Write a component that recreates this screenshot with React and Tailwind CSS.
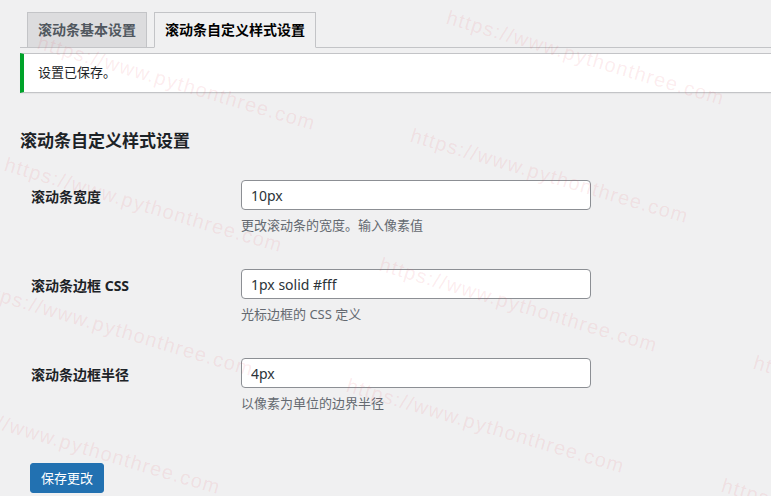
import React from "react";

const marks = [
  [450, 10],
  [41, 35],
  [414, 128],
  [8, 157],
  [383, 257],
  [-21, 281],
  [350, 378],
  [-54, 399],
  [757, 355],
  [725, 478],
];

const rows = [
  { label: "滚动条宽度", value: "10px", desc: "更改滚动条的宽度。输入像素值" },
  { label: "滚动条边框 CSS", value: "1px solid #fff", desc: "光标边框的 CSS 定义" },
  { label: "滚动条边框半径", value: "4px", desc: "以像素为单位的边界半径" },
];

export default function App() {
  return (
    <div className="relative w-[771px] h-[496px] overflow-hidden bg-[#f0f0f1] font-['Noto_Sans','Noto_Sans_CJK_SC',sans-serif] text-[#1d2327]">
      <div className="pl-5 pt-3">
        <div className="flex gap-[7px] pl-[7px] border-b border-[#c3c4c7]">
          <div className="-mb-px h-[36px] px-[10px] border border-[#c3c4c7] bg-[#dcdcde] text-[#50575e] text-[14px] font-bold leading-[34px] whitespace-nowrap">
            滚动条基本设置
          </div>
          <div className="-mb-px h-[36px] px-[10px] border border-[#c3c4c7] border-b-[#f0f0f1] bg-[#f0f0f1] text-black text-[14px] font-bold leading-[34px] whitespace-nowrap">
            滚动条自定义样式设置
          </div>
        </div>

        <div className="mt-[5px] h-[40px] flex items-center bg-white border-y border-[#c3c4c7] border-l-4 border-l-[#00a32a] pl-[14px] text-[13px] text-[#1d2327] shadow-[0_1px_1px_rgba(0,0,0,0.04)]">
          设置已保存。
        </div>

        <h2 className="mt-[36px] text-[17px] font-bold leading-[24px] text-[#1d2327]">
          滚动条自定义样式设置
        </h2>

        <div className="mt-[27px] flex flex-col gap-[35px]">
          {rows.map((r) => (
            <div key={r.label} className="flex items-start">
              <div className="w-[221px] pl-[11px] pt-[2px] text-[14px] font-bold leading-[30px] text-[#1d2327] whitespace-nowrap">
                {r.label}
              </div>
              <div className="flex flex-col">
                <input
                  readOnly
                  value={r.value}
                  className="w-[350px] h-[30px] rounded-[4px] border border-[#8c8f94] bg-white px-[9px] text-[14px] text-[#2c3338] outline-none"
                />
                <div className="mt-[6px] text-[13px] leading-[18px] text-[#646970] whitespace-nowrap">
                  {r.desc}
                </div>
              </div>
            </div>
          ))}
        </div>

        <button className="mt-[51px] ml-[10px] h-[30px] px-[10px] rounded-[3px] border border-[#2271b1] bg-[#2271b1] text-[13px] leading-[28px] text-white">
          保存更改
        </button>
      </div>

      {marks.map(([x, y], i) => (
        <span
          key={i}
          className="pointer-events-none absolute origin-top-left rotate-[16.5deg] whitespace-nowrap font-['Liberation_Sans',sans-serif] text-[20px] leading-[20px] tracking-[1.2px] text-[rgba(230,70,85,0.1)]"
          style={{ left: x, top: y - 3 }}
        >
          https://www.pythonthree.com
        </span>
      ))}
    </div>
  );
}
